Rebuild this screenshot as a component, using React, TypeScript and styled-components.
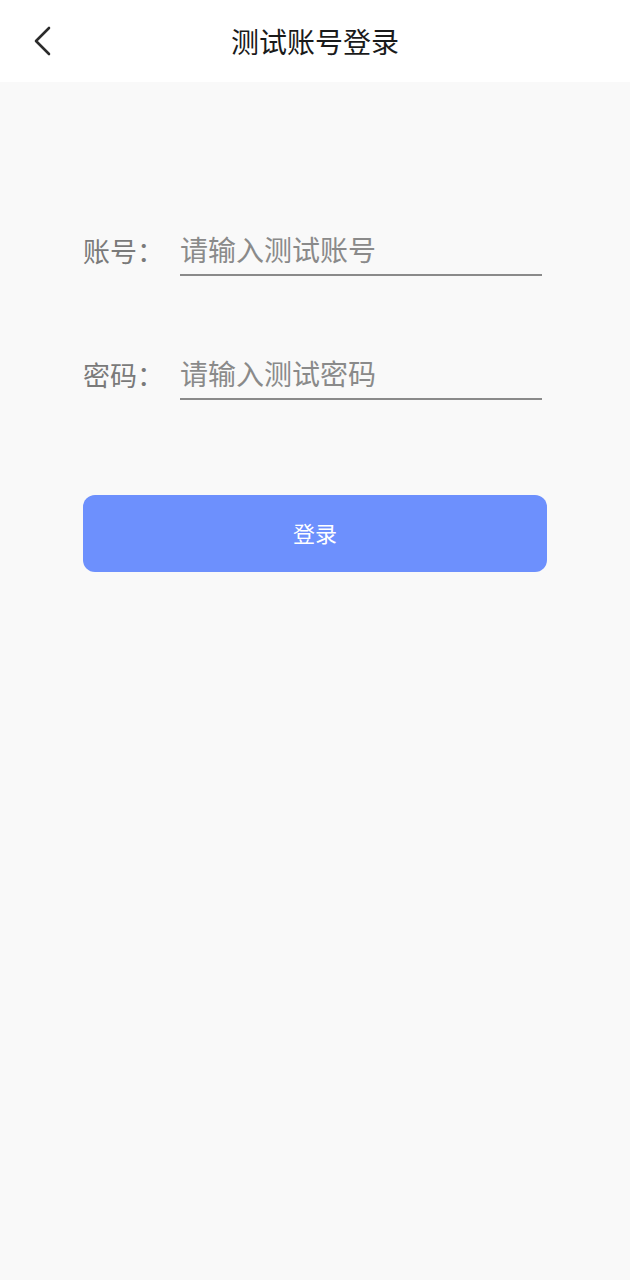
import React from "react";
import styled, { createGlobalStyle } from "styled-components";

const GlobalStyle = createGlobalStyle`
    html, body {
        margin: 0;
        padding: 0;
        background: #f9f9f9;
        font-family: "Noto Sans CJK SC", "Noto Sans", sans-serif;
    }
`

const Page = styled.div`
    display: flex;
    flex-direction: column;
    min-height: 1280px;
    background: #f9f9f9;
`

const Header = styled.div`
    position: relative;
    height: 82px;
    background: #ffffff;
    display: flex;
    align-items: center;
    justify-content: center;
`

const BackButton = styled.button`
    position: absolute;
    left: 24px;
    top: 21px;
    width: 36px;
    height: 40px;
    padding: 0;
    border: none;
    background: transparent;
    display: flex;
    align-items: center;
    justify-content: center;
`

const Title = styled.h1`
    margin: 0;
    font-size: 28px;
    font-weight: 400;
    color: #1a1a1a;
`

const Form = styled.div`
    display: flex;
    flex-direction: column;
    padding: 142px 83px 0 83px;
`

const Row = styled.div<{ $gap?: number }>`
    display: flex;
    align-items: flex-end;
    margin-top: ${p => p.$gap ?? 0}px;
`

const Label = styled.span`
    width: 97px;
    font-size: 27px;
    line-height: 50px;
    color: #7a7a7a;
    white-space: nowrap;
`

const Input = styled.input`
    width: 362px;
    height: 50px;
    padding: 0;
    border: none;
    border-bottom: 2px solid #8a8a8a;
    background: transparent;
    font-family: inherit;
    font-size: 28px;
    color: #333;
    outline: none;

    &::placeholder {
        color: #8a8a8a;
    }
`

const SubmitButton = styled.button`
    margin-top: 95px;
    width: 464px;
    height: 77px;
    padding: 0 0 4px 0;
    border: none;
    border-radius: 12px;
    background: #6d90fd;
    color: #ffffff;
    font-family: inherit;
    font-size: 22px;
`

const App = () => {
    const [account, setAccount] = React.useState("");
    const [password, setPassword] = React.useState("");

    return (
        <Page>
            <GlobalStyle />
            <Header>
                <BackButton aria-label="back">
                    <svg width="20" height="30" viewBox="0 0 20 30" fill="none">
                        <path d="M17 2 L4 15 L17 28" stroke="#2b2b2b" strokeWidth="2.6" strokeLinecap="round" strokeLinejoin="round" />
                    </svg>
                </BackButton>
                <Title>测试账号登录</Title>
            </Header>
            <Form>
                <Row>
                    <Label>账号：</Label>
                    <Input
                        placeholder="请输入测试账号"
                        value={account}
                        onChange={e => setAccount(e.target.value)}
                    />
                </Row>
                <Row $gap={72}>
                    <Label>密码：</Label>
                    <Input
                        type="password"
                        placeholder="请输入测试密码"
                        value={password}
                        onChange={e => setPassword(e.target.value)}
                    />
                </Row>
                <SubmitButton>登录</SubmitButton>
            </Form>
        </Page>
    )
};

export default App;
